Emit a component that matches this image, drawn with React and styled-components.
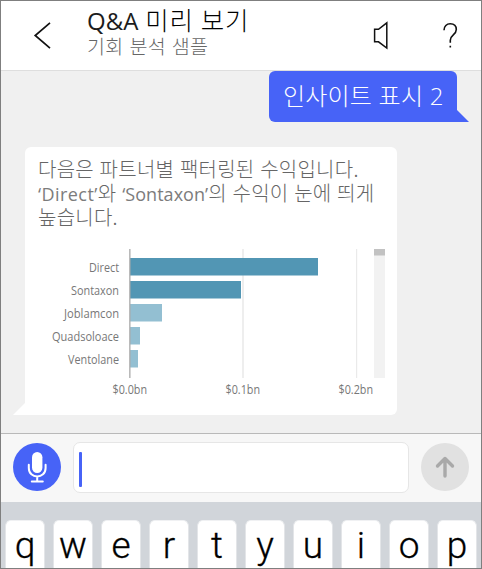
import React from "react";
import styled, { createGlobalStyle } from "styled-components";

const Global = createGlobalStyle`
  * { box-sizing: border-box; }
  body { margin: 0; }
`;

const Screen = styled.div`
  width: 482px;
  height: 569px;
  overflow: hidden;
  display: flex;
  flex-direction: column;
  border: 1px solid #7f7f7f;
  background: #f0f0f0;
  font-family: "Noto Sans CJK KR", sans-serif;
`;

const Header = styled.header`
  height: 70px;
  flex: none;
  display: flex;
  background: #fff;
  border-bottom: 1px solid #dedede;
`;

const BackButton = styled.div`
  width: 86px;
  padding: 20px 0 0 31px;
`;

const Titles = styled.div`
  width: 284px;
  padding-top: 3px;
`;

const Line = styled.div`
  height: ${(p) => p.$height}px;
  line-height: ${(p) => p.$height}px;
  font-size: ${(p) => p.$size}px;
  letter-spacing: ${(p) => p.$spacing || 0}px;
  word-spacing: ${(p) => p.$gap || 0}px;
  font-weight: 300;
  color: ${(p) => p.$color};
  white-space: pre;
`;

const Latin = styled.span`
  font-family: "Open Sans", sans-serif;
  font-weight: ${(p) => p.$weight || 400};
  font-size: ${(p) => p.$size}px;
  letter-spacing: ${(p) => p.$spacing}px;
  color: ${(p) => p.$color || "inherit"};
  line-height: 1;
`;

const Actions = styled.div`
  display: flex;
  gap: 50px;
  padding-top: 20px;
`;

const Chat = styled.main`
  height: 362px;
  flex: none;
  display: flex;
  flex-direction: column;
  align-items: flex-start;
`;

const Question = styled.div`
  align-self: flex-end;
  display: flex;
  align-items: flex-end;
  height: 51px;
  margin-right: 12px;
`;

const QuestionBody = styled.div`
  width: 188px;
  height: 51px;
  padding: 10px 0 0 14px;
  border-radius: 6px 6px 0 6px;
  background: #4763f7;
`;

const Answer = styled.div`
  display: flex;
  align-items: flex-end;
  margin: 25px 0 0 12px;
`;

const Tail = styled.svg`
  display: block;
  flex: none;
`;

const AnswerBody = styled.div`
  width: 372px;
  height: 268px;
  padding: 10px 0 0 13px;
  border-radius: 6px 6px 6px 0;
  background: #fff;
`;

const Chart = styled.svg`
  display: block;
  margin-top: 13px;
  font-family: "Open Sans", sans-serif;
  font-size: 12px;
  fill: #777;
`;

const Composer = styled.div`
  height: 69px;
  flex: none;
  display: flex;
  gap: 12px;
  padding: 8px 12px 0;
  border-top: 1px solid #b9b9b9;
  background: #f7f7f7;
`;

const RoundButton = styled.div`
  width: 48px;
  height: 48px;
  margin-top: 1px;
  border-radius: 50%;
  background: ${(p) => p.$fill};
`;

const Input = styled.div`
  width: 336px;
  height: 51px;
  padding: 9px 0 0 5px;
  border: 1px solid #e6e6e6;
  border-radius: 7px;
  background: #fff;
`;

const Caret = styled.div`
  width: 3px;
  height: 35px;
  border-radius: 1px;
  background: #4763f7;
`;

const Keyboard = styled.div`
  flex: 1;
  display: flex;
  gap: 8px;
  padding: 18px 0 0 4px;
  background: #d1d5da;
`;

const Key = styled.div`
  width: 40px;
  height: 60px;
  flex: none;
  border-radius: 6px;
  border: 1px solid #e3e5e8;
  border-top-color: #f0f1f3;
  background: #fff;
  color: #000;
  font: 300 37px/50px Roboto, sans-serif;
  -webkit-text-stroke: 0.3px #000;
  text-align: center;
`;

const bars = [
  { label: "Direct", w: 188, text: 30, strong: true },
  { label: "Sontaxon", w: 111, text: 48, strong: true },
  { label: "Joblamcon", w: 32, text: 55 },
  { label: "Quadsoloace", w: 10, text: 67 },
  { label: "Ventolane", w: 8, text: 51 },
];

const ticks = [
  { label: "$0.0bn", x: 92 },
  { label: "$0.1bn", x: 205 },
  { label: "$0.2bn", x: 318 },
];

function RevenueChart() {
  return (
    <Chart width="350" height="156">
      <rect x="204" y="7" width="2" height="129" fill="#eeeeee" />
      <rect x="318" y="7" width="1.2" height="129" fill="#eaeaea" />
      {bars.map((b, i) => (
        <g key={b.label}>
          <text x={81 - b.text} y={30 + i * 23.1} textLength={b.text} lengthAdjust="spacingAndGlyphs">{b.label}</text>
          <rect x="92" y={16 + i * 23} width={b.w} height="17.5" fill={b.strong ? "#5296b4" : "#93bfd2"} />
        </g>
      ))}
      <rect x="91.2" y="7" width="1.3" height="129" fill="#aaa" />
      <rect x="336" y="7" width="11" height="129" fill="#f2f2f2" />
      <rect x="336" y="7" width="11" height="6.5" fill="#c2c2c2" />
      {ticks.map((t) => (
        <text key={t.label} x={t.x - 17.5} y="151.5" textLength="34.5" lengthAdjust="spacingAndGlyphs">{t.label}</text>
      ))}
    </Chart>
  );
}

export default function App() {
  return (
    <>
      <Global />
      <Screen>
        <Header>
          <BackButton>
            <svg width="22" height="30" viewBox="0 0 22 30" fill="none" stroke="#111" strokeWidth="1.7">
              <path d="M18 1.8 3.2 14.5 18 27.2" />
            </svg>
          </BackButton>
          <Titles>
            <Line $height={30} $size={25.5} $color="#000" $spacing={0.8} $gap={0.5}>
              <Latin $size={24} $spacing={0} $color="#1c1c1c">Q&amp;A</Latin> 미리 보기
            </Line>
            <Line $height={23} $size={19.5} $color="#666" $spacing={0.4} $gap={1}>기회 분석 샘플</Line>
          </Titles>
          <Actions>
            <svg width="18" height="30" viewBox="0 0 18 30" fill="none" stroke="#111" strokeWidth="1.5">
              <path d="M3.6 8.3H7.5L15.8 1.8V27L7.5 20.8H3.6Z" />
            </svg>
            <svg width="22" height="30" viewBox="0 0 22 30" fill="none" stroke="#111" strokeWidth="1.6">
              <path d="M5 9.3C5 5.2 7.8 2.8 11.2 2.8C15 2.8 17.3 5.2 17.3 8.6C17.3 14 11.3 13.8 11.3 19.2V21.8M11.3 24.8V26.5" />
            </svg>
          </Actions>
        </Header>
        <Chat>
          <Question>
            <QuestionBody>
              <Line $height={28} $size={24} $color="#fff" $spacing={0.2} $gap={1}>인사이트 표시 <Latin $size={24} $spacing={0} $weight={300}>2</Latin></Line>
            </QuestionBody>
            <Tail width="12" height="12"><path d="M0 0 12 12H0Z" fill="#4763f7" /></Tail>
          </Question>
          <Answer>
            <Tail width="12" height="12"><path d="M12 0V12H0Z" fill="#fff" /></Tail>
            <AnswerBody>
              <Line $height={24} $size={20} $color="#666" $spacing={0.25} $gap={1}>다음은 파트너별 팩터링된 수익입니다.</Line>
              <Line $height={24} $size={20} $color="#666" $spacing={0.25} $gap={1}>
                <Latin $size={18} $spacing={0.45} $color="#7c7c7c">‘Direct’</Latin>와 <Latin $size={18} $spacing={0.05} $color="#7c7c7c">‘Sontaxon’</Latin>의 수익이 눈에 띄게
              </Line>
              <Line $height={24} $size={20} $color="#666" $spacing={0.25}>높습니다.</Line>
              <RevenueChart />
            </AnswerBody>
          </Answer>
        </Chat>
        <Composer>
          <RoundButton $fill="#4763f7">
            <svg width="48" height="48" fill="none" stroke="#fff" strokeWidth="2" strokeLinecap="round">
              <rect x="19" y="9" width="10.4" height="21" rx="5.2" fill="#fff" stroke="none" />
              <path d="M15.8 21.8V25C15.8 36.3 32.6 36.3 32.6 25V21.8M24.2 34V38.3M18.8 38.5H29.8" />
            </svg>
          </RoundButton>
          <Input><Caret /></Input>
          <RoundButton $fill="#e1e1e1">
            <svg width="48" height="48" fill="none" stroke="#a9a9a9" strokeWidth="3.4" strokeLinecap="round" strokeLinejoin="round">
              <path d="M24 33V15.5M16.5 23 24 15.5 31.5 23" />
            </svg>
          </RoundButton>
        </Composer>
        <Keyboard>
          {"qwertyuiop".split("").map((c) => <Key key={c}>{c}</Key>)}
        </Keyboard>
      </Screen>
    </>
  );
}
